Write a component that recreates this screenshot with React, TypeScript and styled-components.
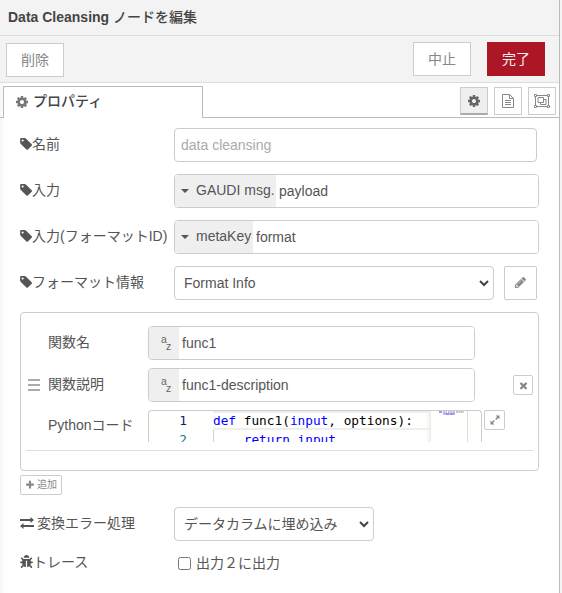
import React from "react";
import styled, { createGlobalStyle, css } from "styled-components";
import { FaBug } from "react-icons/fa";

const GlobalStyle = createGlobalStyle`
  *, *::before, *::after { box-sizing: border-box; }
  body {
    margin: 0;
    background: #f3f3f3;
    color: #555;
    font: 14px/20px "Liberation Sans", "Noto Sans CJK JP", sans-serif;
  }
  button, input, select { font: inherit; color: inherit; margin: 0; }
`;

const Panel = styled.div`
  width: 560px;
  height: 593px;
  overflow: hidden;
  border-right: 1px solid #bbb;
  background: linear-gradient(to right, #f7f7f7, #fff 5px);
`;

const Header = styled.header`
  height: 36px;
  padding: 7px 8px 8px;
  border-bottom: 1px solid #ddd;
  background: #f3f3f3;
  color: #444;
  font-weight: bold;
  white-space: nowrap;
`;

const HeaderJa = styled.span`
  font-weight: 500;
`;

const Toolbar = styled.div`
  display: flex;
  align-items: flex-start;
  gap: 16px;
  height: 47px;
  padding: 6px 14px 0 6px;
  border-bottom: 1px solid #ddd;
  background: #f3f3f3;
`;

const ToolbarButton = styled.button<{ $primary?: boolean; $start?: boolean }>`
  width: 58px;
  height: 34px;
  padding: 0;
  border: 1px solid ${(p) => (p.$primary ? "#ad1625" : "#ccc")};
  background: ${(p) => (p.$primary ? "#ad1625" : "#fff")};
  color: ${(p) => (p.$primary ? "#eee" : "#888")};
  ${(p) =>
    p.$start &&
    css`
      margin: 1px auto 0 0;
    `}
`;

const TabBar = styled.div`
  display: flex;
  height: 35px;
  padding-top: 3px;
`;

const TabEdge = styled.div<{ $grow?: boolean }>`
  display: flex;
  flex: ${(p) => (p.$grow ? "1" : "0 0 3px")};
  justify-content: flex-end;
  gap: 6px;
  padding: ${(p) => (p.$grow ? "1px 3px 0 0" : "0")};
  border-bottom: 1px solid #bbb;
`;

const Tab = styled.div`
  display: flex;
  align-items: center;
  gap: 4px;
  width: 200px;
  padding: 0 11px 4px;
  border: 1px solid #bbb;
  border-bottom: 0;
  color: #444;
  font-weight: 500;
  svg { color: #777; margin-top: 2px; }
`;

const TabIconButton = styled.button<{ $active?: boolean }>`
  display: flex;
  align-items: center;
  justify-content: center;
  width: 28px;
  height: 28px;
  padding: 0;
  border: 1px solid #ccc;
  background: ${(p) => (p.$active ? "#efefef" : "#fff")};
  color: ${(p) => (p.$active ? "#666" : "#888")};
  ${(p) => p.$active && "border-bottom: 2px solid #aaa;"}
`;

const Form = styled.form`
  display: flex;
  flex-direction: column;
  gap: 12px;
  padding: 10px 20px 0;
`;

const Row = styled.div`
  display: flex;
  height: 34px;
`;

const Label = styled.label<{ $gap?: number }>`
  display: flex;
  align-items: center;
  flex: 0 0 154px;
  gap: ${(p) => p.$gap ?? 0}px;
  padding-bottom: 3px;
  white-space: nowrap;
  svg { flex: none; }
`;

const fieldFrame = css`
  height: 34px;
  border: 1px solid #ccc;
  border-radius: 4px;
  background: #fff;
`;

const TextInput = styled.input`
  ${fieldFrame}
  width: 363px;
  padding: 0 6px 1px;
  &::placeholder { color: #aaa; opacity: 1; }
`;

const TypedField = styled.div<{ $width: number }>`
  ${fieldFrame}
  display: flex;
  flex: 0 0 ${(p) => p.$width}px;
  overflow: hidden;
`;

const TypeButton = styled.button<{ $width: number }>`
  display: flex;
  align-items: center;
  flex: 0 0 ${(p) => p.$width}px;
  gap: 7px;
  padding: 0 0 2px 6px;
  border: 0;
  background: #efefef;
  white-space: nowrap;
  svg { flex: none; margin-top: 2px; }
`;

const StringType = styled.span`
  display: flex;
  align-items: center;
  justify-content: center;
  flex: 0 0 30px;
  padding-left: 6px;
  background: #efefef;
`;

const TypedValue = styled.input`
  flex: 1;
  min-width: 0;
  padding: 0 3px 1px;
  border: 0;
  background: #fff;
`;

const SelectBox = styled.button<{ $width: number; $ja?: boolean }>`
  ${fieldFrame}
  display: flex;
  align-items: center;
  justify-content: space-between;
  width: ${(p) => p.$width}px;
  padding: 0 4px 0 9px;
`;

const EditButton = styled.button`
  display: flex;
  align-items: center;
  justify-content: center;
  width: 33px;
  height: 34px;
  margin-left: 10px;
  padding: 0 0 1px;
  border: 1px solid #ccc;
  border-radius: 2px;
  background: #fff;
  color: #888;
`;

const ListArea = styled.section`
  display: flex;
  flex-direction: column;
  align-items: flex-start;
  gap: 4px;
`;

const ListBox = styled.div`
  width: 519px;
  height: 159px;
  padding: 13px 5px 0;
  border: 1px solid #ccc;
  border-radius: 4px;
`;

const ListItem = styled.div`
  display: grid;
  grid-template-columns: 22px 465px 20px;
  align-items: start;
  height: 125px;
  border-bottom: 1px solid #ddd;
`;

const DragHandle = styled.span`
  display: flex;
  flex-direction: column;
  gap: 3px;
  width: 12px;
  margin: 53px 0 0 2px;
`;

const HandleBar = styled.i`
  height: 2px;
  background: #aaa;
`;

const FunctionFields = styled.div`
  display: flex;
  flex-direction: column;
  gap: 8px;
`;

const FunctionRow = styled.div<{ $code?: boolean }>`
  display: flex;
  height: ${(p) => (p.$code ? 32 : 34)}px;
`;

const FunctionLabel = styled.label<{ $top?: number }>`
  flex: 0 0 100px;
  padding-top: ${(p) => p.$top ?? 6}px;
  white-space: nowrap;
`;

const CodeEditor = styled.div`
  display: grid;
  grid-template-columns: 64px 218px 37px 1fr;
  width: 334px;
  height: 32px;
  overflow: hidden;
  border: 1px solid #ccc;
  border-bottom: 0;
  border-radius: 4px 4px 0 0;
  background: #fffffe;
  font: 12.78px/19px "DejaVu Sans Mono", monospace;
`;

const Gutter = styled.div`
  padding-right: 26px;
  text-align: right;
  color: #237893;
`;

const ActiveNumber = styled.div`
  color: #0b216f;
`;

const CodeLines = styled.div`
  white-space: pre;
  color: #000;
  box-shadow: inset -5px 0 5px -4px #ddd;
`;

const CodeLine = styled.div<{ $active?: boolean }>`
  height: 19px;
  ${(p) =>
    p.$active
      ? "border: 2px solid #eee; border-right: 0; border-left: 0; line-height: 16px;"
      : "border-left: 1px solid #d3d3d3; text-indent: -1px;"}
`;

const Keyword = styled.span`
  color: #0000ff;
`;

const Minimap = styled.div`
  border-right: 1px solid #ddd;
  svg { display: block; }
`;

const MiniButton = styled.button<{ $kind: "expand" | "remove" | "add" }>`
  display: flex;
  align-items: center;
  justify-content: center;
  gap: 2px;
  width: ${(p) => (p.$kind === "add" ? 42 : p.$kind === "expand" ? 21 : 20)}px;
  height: 20px;
  padding: 0;
  border: 1px solid #ccc;
  border-radius: 2px;
  background: #fff;
  color: #888;
  font-size: 10px;
  line-height: 16px;
  ${(p) => p.$kind === "expand" && "margin-left: 2px;"}
  ${(p) => p.$kind === "remove" && "margin-top: 49px;"}
`;

const TraceRow = styled(Row)`
  height: 20px;
  align-items: center;
`;

const CheckLabel = styled.label`
  display: flex;
  align-items: center;
  gap: 5px;
  padding-left: 4px;
  white-space: nowrap;
`;

const Checkbox = styled.input`
  width: 13px;
  height: 13px;
`;

const CheckText = styled.span`
  padding-bottom: 1px;
`;

const glyphs = {
  tag: "M576 448q0-53-37.5-90.5t-90.5-37.5-90.5 37.5-37.5 90.5 37.5 90.5 90.5 37.5 90.5-37.5 37.5-90.5zm1067 576q0 53-37 90l-491 492q-39 37-91 37-53 0-90-37l-715-716q-38-37-64.5-101t-26.5-117v-416q0-52 38-90t90-38h416q53 0 117 26.5t102 64.5l715 714q37 39 37 91z",
  cog: "M1152 896q0-106-75-181t-181-75-181 75-75 181 75 181 181 75 181-75 75-181zm512-109v222q0 12-8 23t-20 13l-185 28q-19 54-39 91 35 50 107 138 10 12 10 25t-9 23q-27 37-99 108t-94 71q-12 0-26-9l-138-108q-44 23-91 38-16 136-29 186-7 28-36 28h-222q-14 0-24.5-8.5t-11.5-21.5l-28-184q-49-16-90-37l-141 107q-10 9-25 9-14 0-25-11-126-114-165-168-7-10-7-23 0-12 8-23 15-21 51-66.5t54-70.5q-27-50-41-99l-183-27q-13-2-21-12.5t-8-23.5v-222q0-12 8-23t19-13l186-28q14-46 39-92-40-57-107-138-10-12-10-24 0-10 9-23 26-36 98.5-107.5t94.5-71.5q13 0 26 10l138 107q44-23 91-38 16-136 29-186 7-28 36-28h222q14 0 24.5 8.5t11.5 21.5l28 184q49 16 90 37l142-107q9-9 24-9 13 0 25 10 129 119 165 170 7 8 7 22 0 12-8 23-15 21-51 66.5t-54 70.5q26 50 41 98l183 28q13 2 21 12.5t8 23.5z",
  plus: "M1600 736v192q0 40-28 68t-68 28h-416v416q0 40-28 68t-68 28h-192q-40 0-68-28t-28-68v-416h-416q-40 0-68-28t-28-68v-192q0-40 28-68t68-28h416v-416q0-40 28-68t68-28h192q40 0 68 28t28 68v416h416q40 0 68 28t28 68z",
  times: "M1490 1322q0 40-28 68l-136 136q-28 28-68 28t-68-28l-294-294-294 294q-28 28-68 28t-68-28l-136-136q-28-28-28-68t28-68l294-294-294-294q-28-28-28-68t28-68l136-136q28-28 68-28t68 28l294 294 294-294q28-28 68-28t68 28l136 136q28 28 28 68t-28 68l-294 294 294 294q28 28 28 68z",
  pencil: "M491 1536l91-91-235-235-91 91v107h128v128h107zm523-928q0-22-22-22-10 0-17 7l-542 542q-7 7-7 17 0 22 22 22 10 0 17-7l542-542q7-7 7-17zm-54-192l416 416-832 832h-416v-416zm683 96q0 53-37 90l-166 166-416-416 166-165q36-38 90-38 53 0 91 38l235 234q37 39 37 91z",
};

function Glyph({ name, size = 14 }: { name: keyof typeof glyphs; size?: number }) {
  return (
    <svg width={size} height={size} viewBox="0 0 1792 1792" fill="currentColor">
      <path d={glyphs[name]} />
    </svg>
  );
}

const TagIcon = () => (
  <svg width="12" height="14" viewBox="110 0 1536 1792" fill="currentColor">
    <path d={glyphs.tag} />
  </svg>
);

const CaretIcon = () => (
  <svg width="8" height="4" viewBox="0 0 8 4" fill="currentColor">
    <path d="M0 0h8L4 4z" />
  </svg>
);

const FileIcon = () => (
  <svg width="12" height="14" viewBox="0 0 12 14" fill="none" stroke="currentColor">
    <path d="M.5.5h7l4 4v9H.5zM7.5.5v4h4M3 6.5h6M3 8.5h6M3 10.5h6" />
  </svg>
);

const GroupIcon = () => (
  <svg width="16" height="14" viewBox="0 0 16 14" fill="none" stroke="currentColor">
    <path d="M2.5 1.5h11M2.5 12.5h11M1.5 2.5v9M14.5 2.5v9" />
    <path d="M.5.5h2v2h-2zM13.5.5h2v2h-2zM.5 11.5h2v2h-2zM13.5 11.5h2v2h-2z" fill="#fff" />
    <path d="M4 3.5h5.5v5H4zM9.5 5.5H12v5H6.500v-2" />
  </svg>
);

const Chevron = () => (
  <svg width="10" height="8" viewBox="0 0 10 8" fill="none" stroke="#444" strokeWidth="2">
    <path d="M1 2l4 4 4-4" />
  </svg>
);

const ExchangeIcon = () => (
  <svg width="14" height="12" viewBox="0 0 14 12" fill="currentColor">
    <path d="M0 2h10.500V0L14 3l-3.500 3V4H0zM14 8H3.500V6L0 9l3.500 3v-2H14z" />
  </svg>
);

const ResizeIcon = () => (
  <svg width="10" height="10" viewBox="0 0 10 10" fill="currentColor">
    <path d="M5.5.5h4v4L8.1 3.1 6.2 5l-1-1 1.9-1.9zM4.5 9.5h-4v-4l1.4 1.4L3.8 5l1 1-1.9 1.9z" />
  </svg>
);

const AzIcon = () => (
  <svg width="14" height="22" viewBox="0 0 14 22" fill="#666" fontFamily="Liberation Sans, sans-serif" fontSize="10.5">
    <text x="1" y="11">a</text>
    <text x="6" y="18">z</text>
  </svg>
);

const MinimapDrawing = () => (
  <svg width="36" height="5" viewBox="0 0 36 5">
    <path d="M8 1h3M15 3h8" stroke="#7777f5" strokeWidth="1.500" strokeDasharray="3 .4" />
    <path d="M12 1h4M17 1h7M25 1h8" stroke="#888" strokeWidth="1.200" strokeDasharray="2 .5" />
    <path d="M12 2.800h6M19 2.800h5" stroke="#8989ff" strokeWidth="1.200" />
  </svg>
);

function FunctionField({ label, value }: { label: string; value: string }) {
  return (
    <FunctionRow>
      <FunctionLabel>{label}</FunctionLabel>
      <TypedField $width={327}>
        <StringType><AzIcon /></StringType>
        <TypedValue defaultValue={value} />
      </TypedField>
    </FunctionRow>
  );
}

function TypedRow({ label, type, typeWidth, value }: { label: string; type: string; typeWidth: number; value: string }) {
  return (
    <Row>
      <Label><TagIcon />{label}</Label>
      <TypedField $width={365}>
        <TypeButton type="button" $width={typeWidth}>
          <CaretIcon />
          {type}
        </TypeButton>
        <TypedValue defaultValue={value} />
      </TypedField>
    </Row>
  );
}

export default function App() {
  return (
    <>
      <GlobalStyle />
      <Panel>
        <Header>Data Cleansing <HeaderJa>ノードを編集</HeaderJa></Header>
        <Toolbar>
          <ToolbarButton $start>削除</ToolbarButton>
          <ToolbarButton>中止</ToolbarButton>
          <ToolbarButton $primary>完了</ToolbarButton>
        </Toolbar>
        <TabBar>
          <TabEdge />
          <Tab><Glyph name="cog" />プロパティ</Tab>
          <TabEdge $grow>
            <TabIconButton $active><Glyph name="cog" /></TabIconButton>
            <TabIconButton><FileIcon /></TabIconButton>
            <TabIconButton><GroupIcon /></TabIconButton>
          </TabEdge>
        </TabBar>
        <Form>
          <Row>
            <Label><TagIcon />名前</Label>
            <TextInput placeholder="data cleansing" />
          </Row>
          <TypedRow label="入力" type="GAUDI msg." typeWidth={101} value="payload" />
          <TypedRow label="入力(フォーマットID)" type="metaKey" typeWidth={78} value="format" />
          <Row>
            <Label><TagIcon />フォーマット情報</Label>
            <SelectBox type="button" $width={320}>Format Info<Chevron /></SelectBox>
            <EditButton type="button"><Glyph name="pencil" size={13} /></EditButton>
          </Row>
          <ListArea>
            <ListBox>
              <ListItem>
                <DragHandle><HandleBar /><HandleBar /><HandleBar /></DragHandle>
                <FunctionFields>
                  <FunctionField label="関数名" value="func1" />
                  <FunctionField label="関数説明" value="func1-description" />
                  <FunctionRow $code>
                    <FunctionLabel $top={5}>Pythonコード</FunctionLabel>
                    <CodeEditor>
                      <Gutter><ActiveNumber>1</ActiveNumber>2</Gutter>
                      <CodeLines>
                        <CodeLine $active><Keyword>def</Keyword> func1(<Keyword>input</Keyword>, options):</CodeLine>
                        <CodeLine>{"    "}<Keyword>return input</Keyword></CodeLine>
                      </CodeLines>
                      <Minimap><MinimapDrawing /></Minimap>
                    </CodeEditor>
                    <MiniButton type="button" $kind="expand"><ResizeIcon /></MiniButton>
                  </FunctionRow>
                </FunctionFields>
                <MiniButton type="button" $kind="remove"><Glyph name="times" size={11} /></MiniButton>
              </ListItem>
            </ListBox>
            <MiniButton type="button" $kind="add"><Glyph name="plus" size={10} />追加</MiniButton>
          </ListArea>
          <Row>
            <Label $gap={3}><ExchangeIcon />変換エラー処理</Label>
            <SelectBox type="button" $width={200}>データカラムに埋め込み<Chevron /></SelectBox>
          </Row>
          <TraceRow>
            <Label><FaBug size={13} />トレース</Label>
            <CheckLabel><Checkbox type="checkbox" /><CheckText>出力２に出力</CheckText></CheckLabel>
          </TraceRow>
        </Form>
      </Panel>
    </>
  );
}
